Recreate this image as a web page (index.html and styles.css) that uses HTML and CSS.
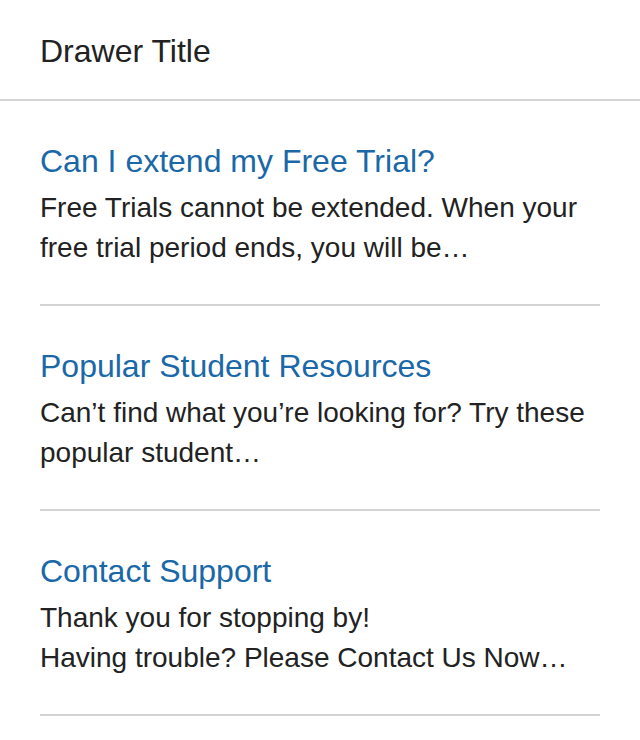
FILE: index.html
```html
<!DOCTYPE html>
<html lang="en">
<head>
<meta charset="utf-8">
<title>Drawer</title>
<link rel="stylesheet" href="styles.css">
</head>
<body>
<div class="drawer">
  <header class="drawer-header">
    <h1 class="drawer-title">Drawer Title</h1>
  </header>
  <ul class="drawer-list">
    <li class="drawer-item">
      <a class="item-title" href="#">Can I extend my Free Trial?</a>
      <p class="item-text">Free Trials cannot be extended. When your free trial period ends, you will be…</p>
    </li>
    <li class="drawer-item">
      <a class="item-title" href="#">Popular Student Resources</a>
      <p class="item-text">Can’t find what you’re looking for? Try these popular student…</p>
    </li>
    <li class="drawer-item">
      <a class="item-title" href="#">Contact Support</a>
      <p class="item-text">Thank you for stopping by!<br>Having trouble? Please Contact Us Now…</p>
    </li>
  </ul>
</div>
</body>
</html>
```

FILE: styles.css
```css
* { box-sizing: border-box; }
html, body {
  margin: 0;
  padding: 0;
  background: #ffffff;
}
body {
  font-family: "Liberation Sans", Arial, Helvetica, sans-serif;
  color: #222222;
}
.drawer {
  width: 640px;
}
.drawer-header {
  height: 101px;
  display: flex;
  align-items: center;
  padding: 3px 40px 0;
  border-bottom: 2px solid #d4d4d4;
}
.drawer-title {
  margin: 0;
  font-size: 32px;
  font-weight: normal;
  line-height: 40px;
  color: #222222;
}
.drawer-list {
  list-style: none;
  margin: 0 40px;
  padding: 0;
}
.drawer-item {
  padding: 40px 0 36px;
  border-bottom: 2px solid #d4d4d4;
}
.item-title {
  display: block;
  font-size: 32px;
  line-height: 40px;
  color: #1a68a8;
  text-decoration: none;
}
.item-text {
  margin: 7px 0 0;
  font-size: 28px;
  line-height: 40px;
  color: #222222;
}
```
